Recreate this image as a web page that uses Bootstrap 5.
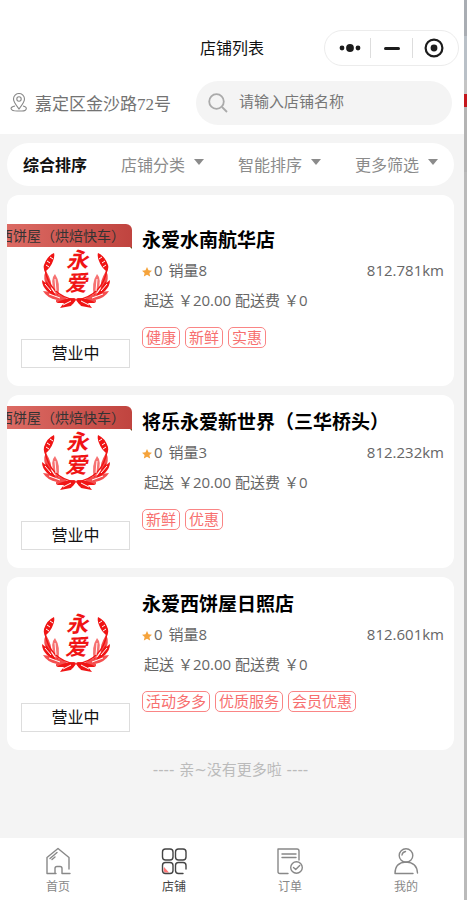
<!DOCTYPE html>
<html lang="zh-CN">
<head>
<meta charset="utf-8">
<meta name="viewport" content="width=device-width, initial-scale=1">
<title>店铺列表</title>
<link href="https://cdn.jsdelivr.net/npm/bootstrap@5.3.0/dist/css/bootstrap.min.css" rel="stylesheet">
<style>
body{font-family:"Open Sans","Noto Sans CJK SC",sans-serif;font-size:15px;line-height:24px;color:#666;background:#f4f4f4}
button{font:inherit;color:inherit}
.edge{width:3px;background:linear-gradient(#a9adb3 0 36px,#b9c0c7 36px 80px,#c4c4c4 80px 94px,#c4161c 94px 107px,#b4b4b4 107px 172px,#bababa 172px)}
.title-bar{padding:30px 5px 0 0;display:grid;grid-template-columns:1fr auto 1fr;align-items:center}
.title-bar h1{font-size:16px;line-height:24px;color:#111;grid-column:2;padding-left:5px}
.capsule{width:135px;height:36px;border:1px solid #ececec;border-radius:18px}
.capsule button{height:20px;flex:1 1 0}
.capsule button+button{border-left:1px solid #ddd}
.place{font-family:"Liberation Serif","Noto Sans CJK SC",serif;font-size:17px;color:#737373;padding-left:10px}
.place span{padding-top:3px}
.search-row{padding:15px 12px 9px 0}
.search-box{width:256px;height:44px;border-radius:22px;background:#f4f4f4;padding:0 12px}
.search-box input{background:transparent;color:#777;outline:0;padding:0 0 4px 3px}
.search-box input::placeholder{color:#777;opacity:1}
.content{padding:9px 10px 0 7px}
.filters{height:43px;border-radius:22px;padding:0 16px;font-size:16px;color:#8b8b8b}
.filters .current{color:#111;font-weight:700}
.caret{border:5px solid transparent;border-top:6px solid #8b8b8b;border-bottom:0;margin:0 0 5px 9px}
.shop{border-radius:12px;padding:14px 10px 18px 0;margin-top:9px}
.shop.first{padding-top:32px}
.media{width:135px;padding-right:12px;padding-left:14px}
.logo{width:68px;height:60px;margin-top:22px;fill:none;stroke:#f01414}
#wreath text{font:italic 700 22px "Noto Sans CJK SC",sans-serif;fill:#f01414;stroke:none}
.status{border:1px solid #ddd;height:29px;line-height:27px;font-size:16px;color:#111;margin-top:30px}
.ribbon{right:10px;top:-3px;height:23px;line-height:23px;width:125px;font-size:14px;padding-right:7px;color:#333;background:linear-gradient(90deg,#dc6b64,#c0443f);border-radius:0 6px 0 0}
.ribbon::after{content:"";position:absolute;right:0;top:100%;border:2px solid transparent;border-top-color:#7b4a22;border-right:0}
.shop h2{font-size:19px;line-height:26px;font-weight:700;color:#000;margin-bottom:5px}
.star{width:10px;height:10px;margin:3px 2px 0 0;fill:#f5a33b}
.sold{margin-left:6px}
.price{margin:6px 0 15px 2px}
.labels{gap:5px}
.label{border:1px solid #fa8585;border-radius:5px;color:#f76f6f;line-height:19px;padding:0 3px}
.end-text{font-family:"DejaVu Sans","Noto Sans CJK SC",sans-serif;color:#bbb;padding:8px 0}
.tabs{height:62px;font-size:12px;line-height:16px;padding-top:8px}
.tabs a{color:#888;text-decoration:none}
.tabs a.current{color:#444}
.tabs svg{width:28px;height:30px;margin-bottom:3px;fill:none;stroke:currentColor;stroke-width:1.4;stroke-linecap:round;stroke-linejoin:round}
</style>
</head>
<body>
<svg class="d-none" aria-hidden="true">
<symbol id="branch" viewBox="0 0 34 60">
<g fill="#f01414" stroke="none">
<path d="M12 4 Q5 7 2 16 Q1 19 3 23 Q9 18 11 12 Q13 7 12 4Z"/>
<path d="M4 22 Q1 27 3 33 L9 41 Q11 33 4 22Z" opacity=".75"/>
<path d="M13 25 Q8 30 12 42 L16 47 Q19 34 13 25Z" opacity=".6"/>
<path d="M0 31 Q0 37 5 42 L14 48 Q11 39 0 31Z"/>
<path d="M1 42 Q5 49 15 51 L27 51 Q17 43 1 42Z" opacity=".75"/>
<path d="M18 59 Q22 51 34 50 L29 57Z"/>
<path d="M14 54 Q22 49 34 49 L25 54Z"/>
</g>
<path d="M3 20 Q7 46 33 51 L30 55 M14 52 L25 52 M4 33 L8 39" stroke-width="1.5"/>
<path d="M5 12 L8 14 M4 16 L7 18 M8 8 L11 10 M3 35 L9 42 M13 30 L14 42 M7 45 L18 49 M21 56 L29 52" stroke="#fff" stroke-width="1"/>
</symbol>
<symbol id="wreath" viewBox="0 0 68 60">
<use href="#branch" width="34" height="60"/>
<g transform="translate(68 0) scale(-1 1)"><use href="#branch" width="34" height="60"/></g>
<text x="24" y="19">永</text><text x="23" y="42">爱</text>
</symbol>
<symbol id="star" viewBox="0 0 20 20"><path d="M10 0l3 6.500 7 .8-5.200 4.700L16.300 19 10 15.600 3.700 19l1.500-7L0 7.300l7-.8z"/></symbol>
</svg>
<div class="d-flex min-vh-100">
<div class="d-flex flex-column flex-grow-1">
<header class="bg-white">
<div class="title-bar">
<h1 class="m-0 fw-normal">店铺列表</h1>
<div class="capsule d-flex align-items-center ms-auto px-1 bg-white">
<button type="button" class="bg-transparent border-0 p-0 d-flex align-items-center justify-content-center" aria-label="更多"><svg width="22" height="10" fill="#1c1c1c"><circle cx="3" cy="5" r="2.400"/><circle cx="11" cy="5" r="3.900"/><circle cx="19" cy="5" r="2.400"/></svg></button>
<button type="button" class="bg-transparent border-top-0 border-end-0 border-bottom-0 p-0 d-flex align-items-center justify-content-center" aria-label="最小化"><svg width="16" height="3"><rect width="16" height="3" rx="1.500" fill="#1c1c1c"/></svg></button>
<button type="button" class="bg-transparent border-top-0 border-end-0 border-bottom-0 p-0 d-flex align-items-center justify-content-center" aria-label="关闭"><svg width="20" height="20"><circle cx="10" cy="10" r="8.400" fill="none" stroke="#1c1c1c" stroke-width="2.200"/><circle cx="10" cy="10" r="3.400" fill="#1c1c1c"/></svg></button>
</div>
</div>
<div class="search-row d-flex align-items-center justify-content-between">
<div class="place d-flex align-items-center">
<svg class="me-2" width="17" height="20" viewBox="0 0 17 20" fill="none" stroke="#888" stroke-width="1.100"><path d="M9 16C6 12 3.500 9 3.500 6a5.500 5.500 0 0 1 11 0c0 3-2.500 6-5.500 10z"/><circle cx="9" cy="6" r="2.200"/><path d="M5 13c-6 1-5 5 2 5h5c5 0 6-4 1-5"/></svg>
<span>嘉定区金沙路72号</span>
</div>
<div class="search-box d-flex align-items-center">
<svg class="flex-shrink-0" width="20" height="20" fill="none" stroke="#aaa" stroke-width="1.800"><circle cx="8.500" cy="8.500" r="7.300"/><path d="M14 14l5 5"/></svg>
<input class="border-0 w-100 ms-2" type="text" placeholder="请输入店铺名称" aria-label="请输入店铺名称">
</div>
</div>
</header>

<main class="content">
<div class="filters bg-white d-flex align-items-center justify-content-between">
<button type="button" class="current bg-transparent border-0 p-0">综合排序</button>
<button type="button" class="bg-transparent border-0 p-0 d-flex align-items-center">店铺分类<span class="caret"></span></button>
<button type="button" class="bg-transparent border-0 p-0 d-flex align-items-center">智能排序<span class="caret"></span></button>
<button type="button" class="bg-transparent border-0 p-0 d-flex align-items-center">更多筛选<span class="caret"></span></button>
</div>

<article class="shop first bg-white d-flex">
<div class="media flex-shrink-0 position-relative text-center">
<div class="ribbon position-absolute text-nowrap"><div class="d-flex justify-content-end overflow-hidden"><span>西饼屋（烘焙快车）</span></div></div>
<svg class="logo"><use href="#wreath"/></svg>
<div class="status">营业中</div>
</div>
<div class="flex-grow-1">
<h2>永爱水南航华店</h2>
<div class="d-flex justify-content-between"><span class="d-flex align-items-center"><svg class="star"><use href="#star"/></svg>0<span class="sold">销量8</span></span><span>812.781km</span></div>
<div class="price">起送 ￥20.00 配送费 ￥0</div>
<div class="labels d-flex"><span class="label">健康</span><span class="label">新鲜</span><span class="label">实惠</span></div>
</div>
</article>

<article class="shop bg-white d-flex">
<div class="media flex-shrink-0 position-relative text-center">
<div class="ribbon position-absolute text-nowrap"><div class="d-flex justify-content-end overflow-hidden"><span>西饼屋（烘焙快车）</span></div></div>
<svg class="logo"><use href="#wreath"/></svg>
<div class="status">营业中</div>
</div>
<div class="flex-grow-1">
<h2>将乐永爱新世界（三华桥头）</h2>
<div class="d-flex justify-content-between"><span class="d-flex align-items-center"><svg class="star"><use href="#star"/></svg>0<span class="sold">销量3</span></span><span>812.232km</span></div>
<div class="price">起送 ￥20.00 配送费 ￥0</div>
<div class="labels d-flex"><span class="label">新鲜</span><span class="label">优惠</span></div>
</div>
</article>

<article class="shop bg-white d-flex">
<div class="media flex-shrink-0 position-relative text-center">
<svg class="logo"><use href="#wreath"/></svg>
<div class="status">营业中</div>
</div>
<div class="flex-grow-1">
<h2>永爱西饼屋日照店</h2>
<div class="d-flex justify-content-between"><span class="d-flex align-items-center"><svg class="star"><use href="#star"/></svg>0<span class="sold">销量8</span></span><span>812.601km</span></div>
<div class="price">起送 ￥20.00 配送费 ￥0</div>
<div class="labels d-flex"><span class="label">活动多多</span><span class="label">优质服务</span><span class="label">会员优惠</span></div>
</div>
</article>
<div class="end-text text-center">---- 亲~没有更多啦 ----</div>
</main>

<nav class="tabs bg-white d-flex mt-auto">
<a href="#" class="flex-fill w-25 d-flex flex-column align-items-center"><svg viewBox="0 0 28 30"><path d="M12 27.500H3V11.500L14 2.500 25 11.500V23M26 27.500h-8v-5q0-2-2-2h-3q-2 0-2 2v5M6 12.500l7-6M8 13.500l3-2.500"/></svg>首页</a>
<a href="#" class="current flex-fill w-25 d-flex flex-column align-items-center"><svg viewBox="0 0 28 30"><path d="M4 21l5 5.500H5q-2-1-1-5.500z" fill="#f77" stroke="none"/><rect x="2.500" y="3" width="10.500" height="11" rx="3"/><rect x="15.500" y="3" width="10.500" height="11" rx="3"/><rect x="2.500" y="16.500" width="10.500" height="11" rx="3"/><path d="M26 23v-3.500q0-3-3-3h-4.500q-3 0-3 3v5q0 3 3 3H23"/></svg>店铺</a>
<a href="#" class="flex-fill w-25 d-flex flex-column align-items-center"><svg viewBox="0 0 28 30"><path d="M12 27.500H4q-2 0-2-2V3h19q2 0 2 2v9M6 8h14M6 11.500h14"/><circle cx="20.500" cy="21.500" r="5.800"/><path d="M17.500 21.500l2.200 2 4-4"/></svg>订单</a>
<a href="#" class="flex-fill w-25 d-flex flex-column align-items-center"><svg viewBox="0 0 28 30"><circle cx="14" cy="9.500" r="6.800"/><path d="M21 27.500H3q0-11 11-11.500 11 .5 11.500 11M10 9q.5-3 3.500-3.500"/></svg>我的</a>
</nav>
</div>
<div class="edge flex-shrink-0"></div>
</div>
<script src="https://cdn.jsdelivr.net/npm/bootstrap@5.3.0/dist/js/bootstrap.bundle.min.js"></script>
</body>
</html>
